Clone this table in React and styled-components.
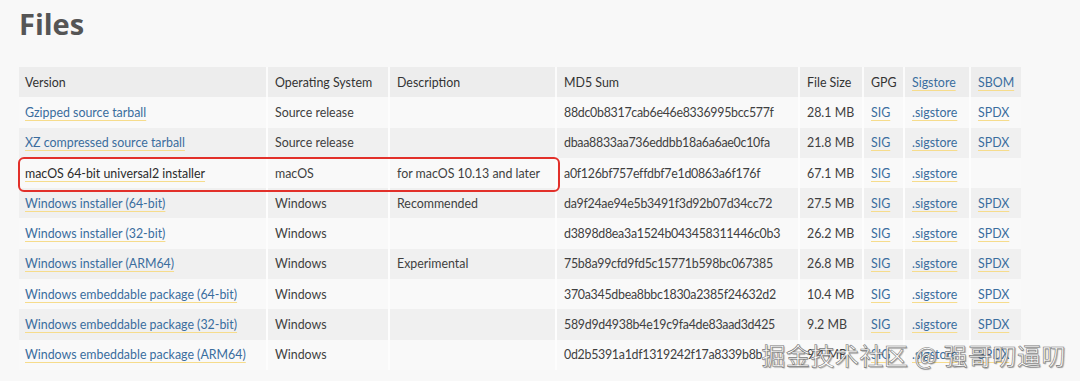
import React from 'react';
import styled, { createGlobalStyle } from 'styled-components';

const GlobalStyle = createGlobalStyle`
    html, body {
        margin: 0;
        padding: 0;
        background: #f8f8f8;
    }
    body {
        font-family: Lato, 'Noto Sans', sans-serif;
        color: #3a3a3a;
    }
`;

const columns = [248, 122, 167, 243, 64, 41, 66, 51];

const files = [
    { name: 'Gzipped source tarball', os: 'Source release', desc: '', md5: '88dc0b8317cab6e46e8336995bcc577f', size: '28.1 MB', sbom: true },
    { name: 'XZ compressed source tarball', os: 'Source release', desc: '', md5: 'dbaa8833aa736eddbb18a6a6ae0c10fa', size: '21.8 MB', sbom: true },
    { name: 'macOS 64-bit universal2 installer', os: 'macOS', desc: 'for macOS 10.13 and later', md5: 'a0f126bf757effdbf7e1d0863a6f176f', size: '67.1 MB', sbom: false, marked: true },
    { name: 'Windows installer (64-bit)', os: 'Windows', desc: 'Recommended', md5: 'da9f24ae94e5b3491f3d92b07d34cc72', size: '27.5 MB', sbom: true },
    { name: 'Windows installer (32-bit)', os: 'Windows', desc: '', md5: 'd3898d8ea3a1524b043458311446c0b3', size: '26.2 MB', sbom: true },
    { name: 'Windows installer (ARM64)', os: 'Windows', desc: 'Experimental', md5: '75b8a99cfd9fd5c15771b598bc067385', size: '26.8 MB', sbom: true },
    { name: 'Windows embeddable package (64-bit)', os: 'Windows', desc: '', md5: '370a345dbea8bbc1830a2385f24632d2', size: '10.4 MB', sbom: true },
    { name: 'Windows embeddable package (32-bit)', os: 'Windows', desc: '', md5: '589d9d4938b4e19c9fa4de83aad3d425', size: '9.2 MB', sbom: true },
    { name: 'Windows embeddable package (ARM64)', os: 'Windows', desc: '', md5: '0d2b5391a1df1319242f17a8339b8b', size: '9.4 MB', sbom: true },
];

const Page = styled.div`
    position: relative;
    width: 1080px;
    height: 381px;
    overflow: hidden;
    padding: 5px 0 0 19px;
    box-sizing: border-box;
`;

const Title = styled.h1`
    margin: 0 0 24px 0;
    font-family: 'Open Sans', Lato, sans-serif;
    font-size: 29px;
    font-weight: 700;
    line-height: 38px;
    color: #555;
`;

const TableWrap = styled.div`
    position: relative;
    width: 1002px;
`;

const Table = styled.table`
    table-layout: fixed;
    width: 1002px;
    border-collapse: collapse;
    font-size: 12.4px;
`;

const Row = styled.tr`
    height: 30.3px;
    background: ${(p) => (p.$shade ? '#f0f0f0' : '#f9f9f9')};
`;

const HeadCell = styled.th`
    background: #ededed;
    text-align: left;
    font-weight: 400;
    color: #333;
    padding: 0 6px 0 7px;
    border-left: 2px solid #fbfbfb;
    white-space: nowrap;
    &:first-child {
        border-left: none;
        padding-left: 6px;
    }
`;

const Cell = styled.td`
    padding: 0 6px 0 7px;
    color: #3f3f3f;
    border-left: 2px solid #fdfdfd;
    white-space: nowrap;
    letter-spacing: ${(p) => (p.$hash ? '-0.28px' : 'normal')};
    &:first-child {
        border-left: none;
        padding-left: 6px;
    }
`;

const Link = styled.a`
    color: ${(p) => (p.$plain ? '#2b2b2b' : '#3a6d9e')};
    text-decoration: underline;
    text-decoration-color: #f6dc8c;
    text-decoration-thickness: 1px;
    text-underline-offset: 3px;
    cursor: pointer;
`;

const Marker = styled.div`
    position: absolute;
    left: -1px;
    top: ${(p) => p.$top}px;
    width: 538px;
    height: 31px;
    border: 2px solid #e2302a;
    border-radius: 6px;
    pointer-events: none;
`;

const Watermark = styled.div`
    position: absolute;
    right: 14px;
    bottom: 9px;
    font-family: 'Noto Sans CJK SC', sans-serif;
    font-size: 24px;
    letter-spacing: 0.5px;
    color: #fff;
    -webkit-text-stroke: 0.6px #777;
    text-shadow: 1px 1px 1px rgba(0, 0, 0, 0.35);
`;

const App = () => {
    const markedIndex = files.findIndex((f) => f.marked);
    return (
        <Page>
            <GlobalStyle />
            <Title>Files</Title>
            <TableWrap>
                <Table>
                    <colgroup>
                        {columns.map((w, i) => (
                            <col key={i} style={{ width: w }} />
                        ))}
                    </colgroup>
                    <thead>
                        <Row>
                            <HeadCell>Version</HeadCell>
                            <HeadCell>Operating System</HeadCell>
                            <HeadCell>Description</HeadCell>
                            <HeadCell>MD5 Sum</HeadCell>
                            <HeadCell>File Size</HeadCell>
                            <HeadCell>GPG</HeadCell>
                            <HeadCell>
                                <Link>Sigstore</Link>
                            </HeadCell>
                            <HeadCell>
                                <Link>SBOM</Link>
                            </HeadCell>
                        </Row>
                    </thead>
                    <tbody>
                        {files.map((f, i) => (
                            <Row key={f.name} $shade={i % 2 === 1}>
                                <Cell>
                                    <Link $plain={f.marked}>{f.name}</Link>
                                </Cell>
                                <Cell>{f.os}</Cell>
                                <Cell>{f.desc}</Cell>
                                <Cell $hash>{f.md5}</Cell>
                                <Cell>{f.size}</Cell>
                                <Cell>
                                    <Link>SIG</Link>
                                </Cell>
                                <Cell>
                                    <Link>.sigstore</Link>
                                </Cell>
                                <Cell>{f.sbom && <Link>SPDX</Link>}</Cell>
                            </Row>
                        ))}
                    </tbody>
                </Table>
                <Marker $top={Math.round(30.3 * (markedIndex + 1)) - 1} />
            </TableWrap>
            <Watermark>掘金技术社区 @ 强哥叨逼叨</Watermark>
        </Page>
    );
};

export default App;
